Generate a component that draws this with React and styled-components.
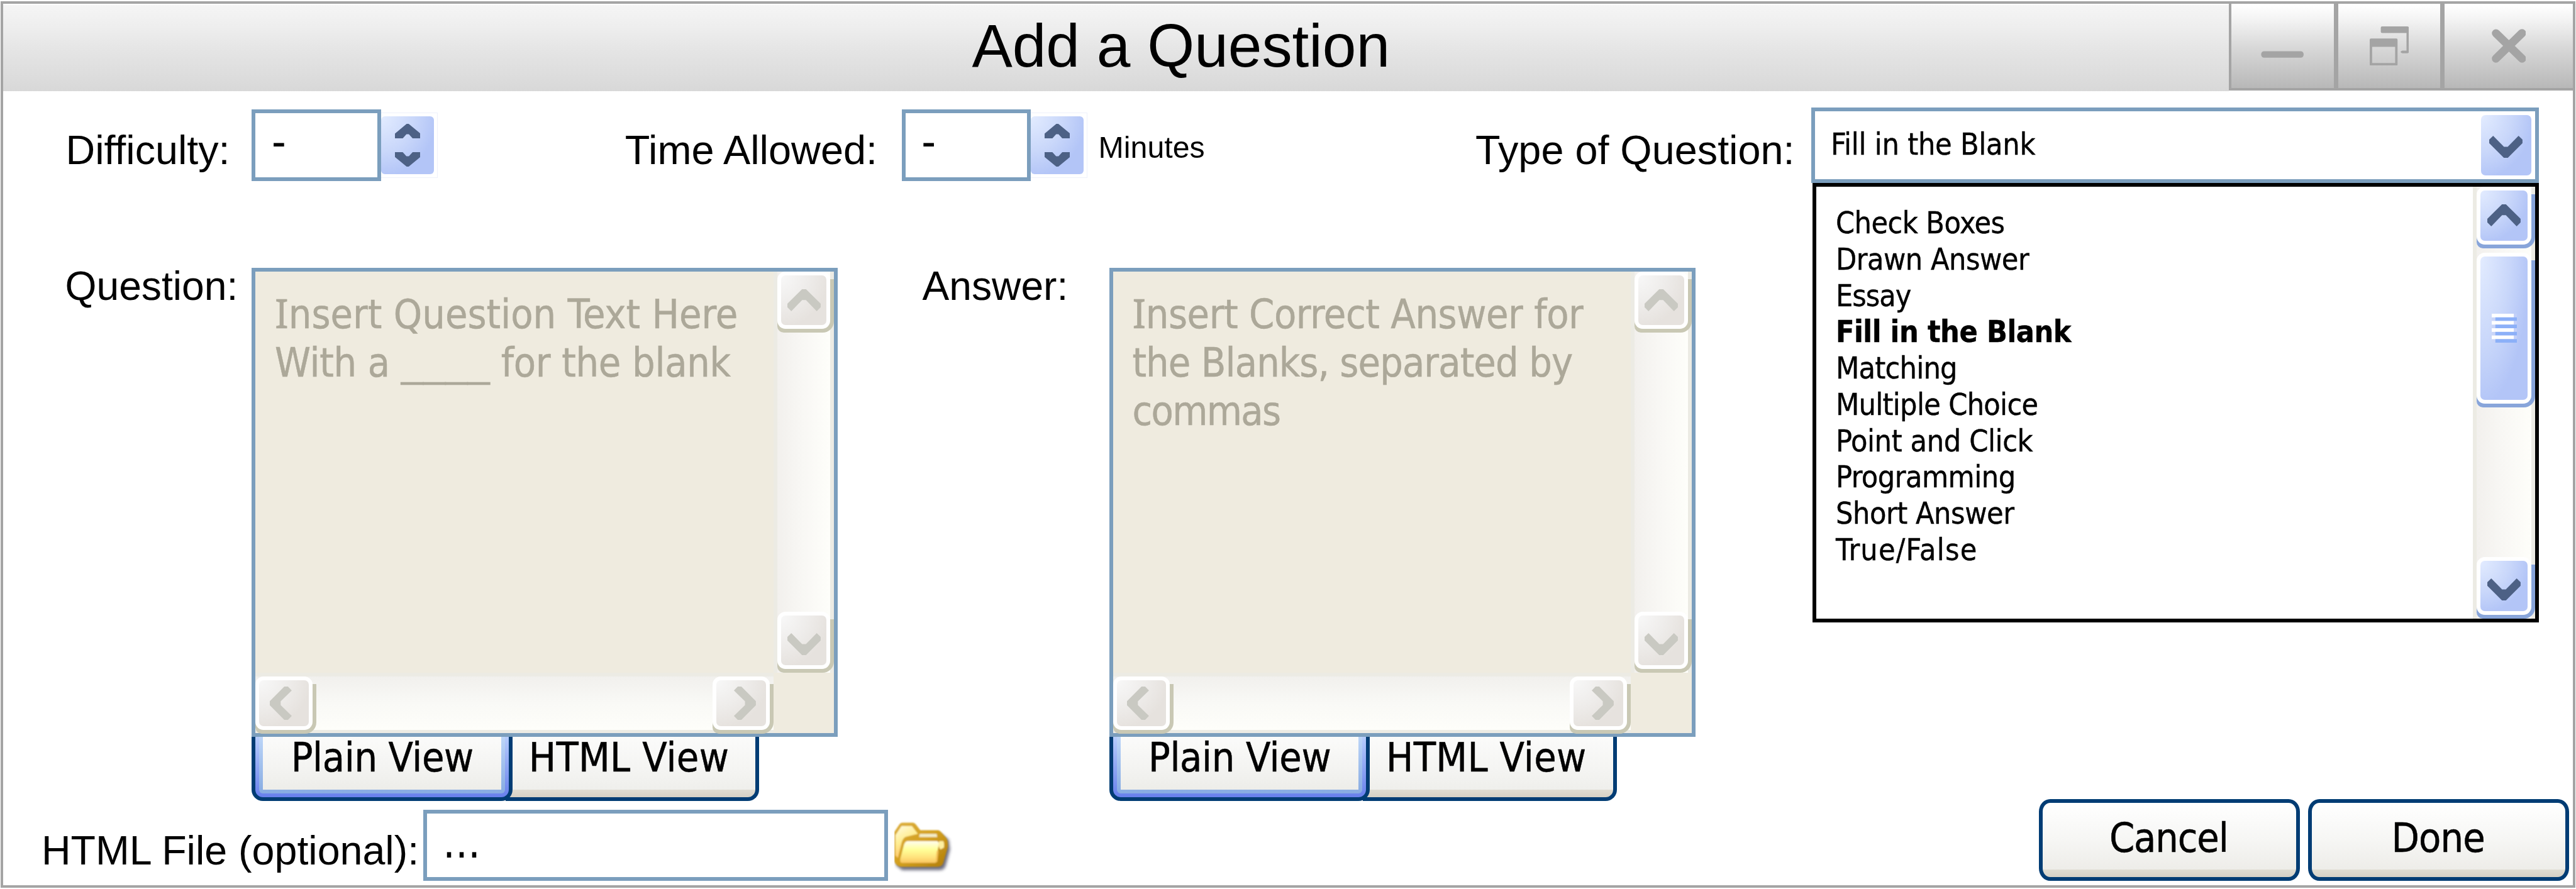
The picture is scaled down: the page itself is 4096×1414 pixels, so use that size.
import React from "react";
import styled, { createGlobalStyle, css } from "styled-components";

const SCALE = 4096 / 4257;
const u = (n) => `${(n * SCALE).toFixed(2)}px`;

const SANS = `"Liberation Sans", Arial, sans-serif`;
const UI = `"DejaVu Sans Condensed", "DejaVu Sans", sans-serif`;

const BLUE = "#7b9ebd";
const NAVY = "#003c74";
const GREY = "#a4a4a4";

const Global = createGlobalStyle`
  *, *::before, *::after { box-sizing: border-box; }
  html, body { margin: 0; padding: 0; background: #fff; overflow: hidden; }
  svg { display: block; flex: none; }
`;

/* ---------- window frame ---------- */

const Page = styled.div`
  width: 4096px;
  height: 1414px;
  padding: 2px 1px;
  background: #fff;
`;

const Frame = styled.div`
  width: 100%;
  height: 100%;
  border: 4px solid ${GREY};
  background: #fff;
  display: flex;
  flex-direction: column;
  color: #000;
`;

const TitleBar = styled.header`
  flex: none;
  display: flex;
  align-items: flex-start;
  height: ${u(144.5)};
`;

const TitleArea = styled.div`
  flex: 1;
  margin-top: 2px;
  padding: ${u(17.6)} 0 0 ${u(1601)};
  background: linear-gradient(#f5f5f5, #eeeeee 25%, #e4e4e4 55%, #d8d8d8);
  height: calc(100% - 2px);
`;

const Title = styled.h1`
  margin: 0;
  font: 400 ${u(100.2)}/1 ${SANS};
  white-space: nowrap;
`;

const Controls = styled.div`
  display: flex;
  height: ${u(143.3)};
  border-left: 4px solid ${GREY};
  border-bottom: 4px solid ${GREY};
  background: ${GREY};
  gap: 7px;
`;

const ControlButton = styled.div`
  width: ${(p) => u(p.$w)};
  height: 100%;
  display: flex;
  align-items: center;
  justify-content: center;
  background: linear-gradient(#ffffff, #f4f4f4 18%, #d8d8d8 52%, #b8b8b8);
`;

/* ---------- body rows ---------- */

const TopRow = styled.section`
  flex: none;
  display: flex;
  align-items: flex-start;
  height: ${u(287)};
  padding-left: ${u(103.4)};
  position: relative;
  z-index: 1;
`;

const EditorRow = styled.section`
  flex: none;
  display: flex;
  align-items: flex-start;
  height: ${u(883)};
  padding-left: ${u(102.3)};
`;

const BottomRow = styled.section`
  flex: 1;
  display: flex;
  align-items: flex-start;
  padding-left: ${u(63.3)};
  padding-right: 6px;
`;

const Label = styled.label`
  flex: none;
  width: ${(p) => u(p.$w)};
  margin-top: ${(p) => u(p.$top || 0)};
  margin-left: ${(p) => u(p.$left || 0)};
  font: 400 ${(p) => u(p.$size || 67.4)}/1 ${SANS};
  white-space: nowrap;
`;

const Spacer = styled.div`
  flex: 1;
`;

/* ---------- inputs ---------- */

const Field = styled.div`
  flex: none;
  width: ${(p) => u(p.$w)};
  height: ${(p) => u(p.$h)};
  margin-top: ${(p) => u(p.$top)};
  border: 6px solid ${BLUE};
  background: #fff;
  padding-left: ${(p) => u(p.$pad)};
  font: 400 ${u(73)}/${(p) => u(p.$lh)} ${UI};
  overflow: hidden;
`;

const StepperFrame = styled.div`
  flex: none;
  width: ${u(94)};
  height: ${u(108)};
  margin-top: ${u(35.8)};
  padding: 5px 5px 5px 0;
  border: solid #eef1fa;
  border-width: 1px 1px 1px 0;
`;

const blueFace = css`
  background: radial-gradient(
    ellipse farthest-side at 0 0,
    #e3ecff 0%,
    #c9d7fa 62%,
    #b3c5f7 104%
  );
`;

const greyFace = css`
  background: radial-gradient(
    ellipse farthest-side at 0 0,
    #f8f8f8 0%,
    #eeecea 60%,
    #e6e2de 104%
  );
`;

const StepperFace = styled.div`
  width: 100%;
  height: 100%;
  border-radius: 6px;
  display: flex;
  flex-direction: column;
  align-items: center;
  justify-content: center;
  gap: ${u(23)};
  ${blueFace}
`;

/* ---------- scroll bars ---------- */

const ScrollKey = styled.div`
  flex: none;
  width: ${(p) => u(p.$w + 6)};
  height: ${(p) => u(p.$h + 6)};
  background: linear-gradient(
      ${(p) => (p.$active ? "#88a5da" : "#c9c8b4")},
      ${(p) => (p.$active ? "#88a5da" : "#c9c8b4")}
    )
    0 12px / 100% 100% no-repeat;
  border-radius: 0 0 18px 10px;
`;

const ScrollCap = styled.div`
  width: ${(p) => u(p.$w)};
  height: ${(p) => u(p.$h)};
  padding: 6px;
  border-radius: 13px;
  background: #fff;
`;

const ScrollFace = styled.div`
  width: 100%;
  height: 100%;
  border-radius: 7px;
  display: flex;
  align-items: center;
  justify-content: center;
  ${(p) => (p.$active ? blueFace : greyFace)}
  padding: ${(p) => p.$shift};
`;

const VTrack = styled.div`
  flex: none;
  width: ${(p) => u(p.$w)};
  height: 100%;
  display: flex;
  flex-direction: column;
  justify-content: space-between;
  border-left: 6px solid #ecebe4;
  background: linear-gradient(90deg, #f2f0ed, #f8f7f4 45%, #fefefa) 0 0 /
    calc(100% - 6px) 100% no-repeat #ecebe4;
`;

const HTrack = styled.div`
  flex: 1;
  display: flex;
  justify-content: space-between;
  border-top: 6px solid #ecebe4;
  background: linear-gradient(#f1f0ed, #f9f9f6 50%, #fefefa) 0 0 / 100%
    calc(100% - 5px) no-repeat #ecebe4;
`;

const KeyStack = styled.div`
  display: flex;
  flex-direction: column;
  gap: ${u(7.5)};
`;

/* ---------- editor ---------- */

const EditorColumn = styled.div`
  flex: none;
  width: ${u(968.7)};
  margin-top: ${u(5.3)};
`;

const EditorBox = styled.div`
  height: ${u(775.4)};
  border: 6px solid ${BLUE};
  background: #efebdf;
  display: flex;
  flex-direction: column;
`;

const EditorMain = styled.div`
  flex: 1;
  min-height: 0;
  display: flex;
`;

const EditorFoot = styled.div`
  flex: none;
  height: ${u(100.6)};
  display: flex;
`;

const FootCorner = styled.div`
  flex: none;
  width: ${u(100.5)};
`;

const Placeholder = styled.div`
  flex: 1;
  padding: ${u(30.5)} 0 0 ${u(31.8)};
  color: #aca899;
  font: 400 ${u(66.7)}/${u(80)} ${UI};
  -webkit-text-stroke: 0.5px currentColor;
  white-space: nowrap;
`;

const Line = styled.div`
  height: ${u(80)};
  letter-spacing: ${(p) => u(p.$track)};
`;

const SerifI = styled.span`
  font-family: "Noto Sans", sans-serif;
  line-height: 0;
`;

const Blank = styled.span`
  font-family: ${SANS};
  font-size: 0.985em;
  line-height: 0;
  letter-spacing: 0;
`;

/* ---------- tabs ---------- */

const Tabs = styled.div`
  display: flex;
  height: ${u(105.3)};
  font: 400 ${u(66.7)}/1 ${UI};
  -webkit-text-stroke: 0.5px currentColor;
  white-space: nowrap;
`;

const ActiveTab = styled.div`
  width: ${u(431)};
  border: 6px solid ${NAVY};
  border-top: 0;
  border-radius: 0 0 18px 18px;
  background: ${NAVY};
  position: relative;
`;

const Ring = styled.div`
  height: 100%;
  padding: 0 6px 6px;
  border-radius: 0 0 ${(p) => p.$r}px ${(p) => p.$r}px;
  background: linear-gradient(${(p) => p.$from}, ${(p) => p.$to});
`;

const TabFace = styled.div`
  height: 100%;
  background: linear-gradient(#fbfbfa, #f4f4f2 55%, #edede9);
  text-align: center;
`;

const InactiveTab = styled.div`
  width: ${u(419.5)};
  margin-left: -${u(12)};
  padding-left: ${u(38.6)};
  border: 6px solid ${NAVY};
  border-width: 0 6px 6px 0;
  border-radius: 0 0 18px 0;
  background: linear-gradient(#dfdcd2, #d6d0c5) 0 100% / 100% 12px no-repeat,
    linear-gradient(#fbfbfa, #f4f4f2 55%, #edede9);
`;

const TabText = styled.div`
  padding-top: 1px;
  letter-spacing: ${(p) => u(p.$track)};
`;

/* ---------- dropdown ---------- */

const Combo = styled.div`
  flex: none;
  position: relative;
  width: ${u(1202.4)};
  height: ${u(124.7)};
  margin-top: ${u(27)};
`;

const ComboField = styled.div`
  width: 100%;
  height: 100%;
  border: 6px solid ${BLUE};
  background: #fff;
  display: flex;
  justify-content: space-between;
  padding: 6px 6px 6px ${u(26)};
`;

const ComboText = styled.span`
  margin-top: ${u(22.6)};
  font: 400 ${u(50)}/1 ${UI};
  letter-spacing: ${u(-0.28)};
  -webkit-text-stroke: 0.4px currentColor;
`;

const ComboButton = styled.div`
  width: ${u(83)};
  height: 100%;
  border-radius: 7px;
  display: flex;
  align-items: center;
  justify-content: center;
  padding-top: ${u(6)};
  ${blueFace}
`;

const Menu = styled.div`
  position: absolute;
  left: ${u(2.6)};
  top: ${u(124.6)};
  width: ${u(1200)};
  height: ${u(726.4)};
  border: 6px solid #000;
  background: #fff;
  display: flex;
`;

const Options = styled.ul`
  flex: 1;
  margin: 0;
  padding: ${u(30.5)} 0 0 ${u(31.7)};
  list-style: none;
  font: 400 ${u(50)}/${u(60.02)} ${UI};
  -webkit-text-stroke: 0.4px currentColor;
`;

const Option = styled.li`
  height: ${u(60.02)};
  font-weight: ${(p) => (p.$selected ? 700 : 400)};
  letter-spacing: ${(p) => u(p.$track)};
`;

/* ---------- footer buttons ---------- */

const PushButton = styled.button`
  flex: none;
  width: ${u(431)};
  height: ${u(135.7)};
  margin: 0 0 0 ${(p) => u(p.$left || 0)};
  padding: 0 ${u(2)} ${u(6)} 0;
  border: 6px solid ${NAVY};
  border-radius: 18px / 20px;
  background: linear-gradient(#dfdcd2, #d6d0c5) 0 100% / 100% 12px no-repeat,
    linear-gradient(#ffffff, #f6f6f4 50%, #edece8 92%) padding-box;
  color: #000;
  font: 400 ${u(66.7)}/1 ${UI};
  -webkit-text-stroke: 0.5px currentColor;
  letter-spacing: ${(p) => u(p.$track)};
`;

const FolderSlot = styled.div`
  margin: ${u(37)} 0 0 ${u(11)};
`;

/* ---------- drawings ---------- */

const ANGLE = { up: 0, right: 90, down: 180, left: 270 };

function Chevron({ dir, color }) {
  const tall = dir === "left" || dir === "right";
  return (
    <svg
      width={(tall ? 36.3 : 55) * SCALE}
      height={(tall ? 55 : 36.3) * SCALE}
      viewBox={tall ? "-18.15 -27.5 36.3 55" : "-27.5 -18.15 55 36.3"}
    >
      <path
        transform={`rotate(${ANGLE[dir]}) translate(-27.5 -18.15)`}
        d="M24.2 0h6.6L55 24v6l-6.5 6.3L30.6 18h-6.2L6.5 36.3 0 30v-6z"
        fill={color}
      />
    </svg>
  );
}

function StepChevron({ down }) {
  return (
    <svg width={42 * SCALE} height={24 * SCALE} viewBox="0 0 42 24">
      <path
        transform={down ? "rotate(180 21 12)" : undefined}
        d="M19.3 0h3.4L42 16v8H29.2L23 17.2h-4L12.8 24H0v-8z"
        fill="#4d6185"
      />
    </svg>
  );
}

function Grip() {
  return (
    <svg width={42 * SCALE} height={48 * SCALE} viewBox="0 0 42 48">
      {[0, 12, 24, 36].map((y) => (
        <g key={y}>
          <rect x="0" y={y + 6} width="6" height="6" fill="#c9d5f8" />
          <rect x="36" y={y} width="6" height="6" fill="#c3d0f9" />
          <rect x="0" y={y} width="36.5" height="6" fill="#fff" />
          <rect x="6" y={y + 6} width="36" height="6" fill="#8cb0f8" />
        </g>
      ))}
    </svg>
  );
}

function MinimizeIcon() {
  return (
    <svg width={71 * SCALE} height={64 * SCALE} viewBox="0 0 71 64">
      <rect x="0.4" y="41" width="70.2" height="10.8" rx="5" fill={GREY} />
    </svg>
  );
}

function RestoreIcon() {
  return (
    <svg width={65 * SCALE} height={65 * SCALE} viewBox="0 0 65 65">
      <path
        d="M20.500 0h41.500q3 0 3 3v38.500q0 3-3 3h-8q-3-1-3-2.200t3-2.200h6.800V11H20.500q-2.200 0-2.200-2.200V2.200Q18.300 0 20.500 0z"
        fill={GREY}
      />
      <path
        d="M2 20h42q2 0 2 2v41q0 2-2 2H2q-2 0-2-2V22q0-2 2-2zM4 33.800V60.500H42V33.800z"
        fillRule="evenodd"
        fill={GREY}
      />
    </svg>
  );
}

function CloseIcon() {
  return (
    <svg width={57 * SCALE} height={56 * SCALE} viewBox="0 0 57 56">
      <path
        d="M7 7.200 50 49M50 7 7 49"
        stroke={GREY}
        strokeWidth="13.500"
        strokeLinecap="round"
      />
    </svg>
  );
}

function FolderIcon() {
  return (
    <svg width={96 * SCALE} height={88 * SCALE} viewBox="9 9 96 88">
      <defs>
        <linearGradient id="folderBack" x1="0" y1="0" x2="1" y2="1">
          <stop offset="0" stopColor="#dcae3c" />
          <stop offset="0.5" stopColor="#d3a01f" />
          <stop offset="1" stopColor="#b07c08" />
        </linearGradient>
        <linearGradient id="folderInner" x1="0" y1="0" x2="0.4" y2="1">
          <stop offset="0" stopColor="#fffbe0" />
          <stop offset="0.5" stopColor="#ffee94" />
          <stop offset="1" stopColor="#fdbf62" />
        </linearGradient>
        <linearGradient id="folderFront" x1="0" y1="0" x2="0" y2="1">
          <stop offset="0" stopColor="#fffdf0" />
          <stop offset="0.4" stopColor="#ffff98" />
          <stop offset="0.75" stopColor="#ffe27c" />
          <stop offset="1" stopColor="#fbc660" />
        </linearGradient>
        <filter id="shadowBlur" x="-20%" y="-20%" width="140%" height="140%">
          <feGaussianBlur stdDeviation="2.6" />
        </filter>
        <filter id="softEdge" x="-5%" y="-5%" width="110%" height="110%">
          <feGaussianBlur stdDeviation="0.9" />
        </filter>
      </defs>
      <path
        d="M18 30 86 30 99 40 101 56 94 82Q92 90 84 90L22 90 12 82z"
        fill="#3c3c55"
        opacity="0.75"
        filter="url(#shadowBlur)"
      />
      <g filter="url(#softEdge)">
        <path
          d="M9 27 17 15Q19 11.500 23 11.500H40Q43 12 45 15L52 24H81Q84 24 87 28L95 37Q98 41 97.500 52L90 78Q88 84.500 80 84.500H21Q13 84 9 76z"
          fill="url(#folderBack)"
        />
        <path
          d="M11 32 21 17H38L48 30 28 35Q23 37 21 45L15 70 11 66z"
          fill="url(#folderInner)"
        />
        <path d="M51 30H79L80 35.500H50z" fill="#f3ecc8" />
        <path
          d="M32 42H80L83 45 77 78H21Q18 77 19 71L25 48Q27 42 32 42z"
          fill="url(#folderFront)"
        />
        <path d="M83 42H90Q92 46 91 53L85 56 82 50z" fill="#fff0a0" />
        <path d="M82 58 80 76 77 78 79 58z" fill="#f7c35a" />
      </g>
    </svg>
  );
}

/* ---------- composed parts ---------- */

function ScrollButton({ dir, active, w, h }) {
  const shift = {
    up: `0 0 ${u(0.5)} 0`,
    down: `${u(12.5)} 0 0 0`,
    left: `0 ${u(11.5)} 0 0`,
    right: `0 0 0 ${u(13)}`,
  }[dir];
  return (
    <ScrollKey $w={w} $h={h} $active={active}>
      <ScrollCap $w={w} $h={h}>
        <ScrollFace $active={active} $shift={shift}>
          <Chevron dir={dir} color={active ? "#4d6185" : "#c9c9c2"} />
        </ScrollFace>
      </ScrollCap>
    </ScrollKey>
  );
}

function NumberStepper() {
  return (
    <>
      <Field $w={213.3} $h={118.7} $top={30} $pad={26.5} $lh={95}>
        -
      </Field>
      <StepperFrame>
        <StepperFace>
          <StepChevron />
          <StepChevron down />
        </StepperFace>
      </StepperFrame>
    </>
  );
}

function Editor({ children }) {
  return (
    <EditorColumn>
      <EditorBox>
        <EditorMain>
          <Placeholder>{children}</Placeholder>
          <VTrack $w={100.5}>
            <ScrollButton dir="up" w={88} h={94.5} />
            <ScrollButton dir="down" w={88} h={94.5} />
          </VTrack>
        </EditorMain>
        <EditorFoot>
          <HTrack>
            <ScrollButton dir="left" w={94} h={89} />
            <ScrollButton dir="right" w={94.5} h={89} />
          </HTrack>
          <FootCorner />
        </EditorFoot>
      </EditorBox>
      <Tabs>
        <ActiveTab>
          <Ring $from="#b6ccfc" $to="#6880ec" $r={12}>
            <Ring $from="#bcd5f8" $to="#87abe2" $r={6}>
              <TabFace>
                <TabText $track={-0.4}>Plain View</TabText>
              </TabFace>
            </Ring>
          </Ring>
        </ActiveTab>
        <InactiveTab>
          <TabText $track={0.3}>HTML View</TabText>
        </InactiveTab>
      </Tabs>
    </EditorColumn>
  );
}

const OPTIONS = [
  ["Check Boxes", -0.6],
  ["Drawn Answer", -0.55],
  ["Essay", -1.1],
  ["Fill in the Blank", -0.5],
  ["Matching", -0.8],
  ["Multiple Choice", -0.75],
  ["Point and Click", -0.42],
  ["Programming", -0.55],
  ["Short Answer", -0.49],
  ["True/False", 1.2],
];

export default function App() {
  return (
    <Page>
      <Global />
      <Frame>
        <TitleBar>
          <TitleArea>
            <Title>Add a Question</Title>
          </TitleArea>
          <Controls>
            <ControlButton $w={168.8}>
              <MinimizeIcon />
            </ControlButton>
            <ControlButton $w={168.8}>
              <RestoreIcon />
            </ControlButton>
            <ControlButton $w={212}>
              <CloseIcon />
            </ControlButton>
          </Controls>
        </TitleBar>

        <TopRow>
          <Label $w={307.6} $top={64.3} $size={67.2}>
            Difficulty:
          </Label>
          <NumberStepper />
          <Label $w={457.3} $top={64.3} $left={309.4}>
            Time Allowed:
          </Label>
          <NumberStepper />
          <Label $w={180} $top={67.5} $left={17.8} $size={50.2}>
            Minutes
          </Label>
          <Label $w={554.9} $top={64.3} $left={443} $size={67.3}>
            Type of Question:
          </Label>
          <Combo>
            <ComboField>
              <ComboText>Fill in the Blank</ComboText>
              <ComboButton>
                <Chevron dir="down" color="#4d6185" />
              </ComboButton>
            </ComboField>
            <Menu>
              <Options>
                {OPTIONS.map(([name, track]) => (
                  <Option
                    key={name}
                    $track={track}
                    $selected={name === "Fill in the Blank"}
                  >
                    {name}
                  </Option>
                ))}
              </Options>
              <VTrack $w={102.5}>
                <KeyStack>
                  <ScrollButton dir="up" active w={90.2} h={96} />
                  <ScrollKey $w={90.2} $h={249.2} $active>
                    <ScrollCap $w={90.2} $h={249.2}>
                      <ScrollFace $active $shift="0">
                        <Grip />
                      </ScrollFace>
                    </ScrollCap>
                  </ScrollKey>
                </KeyStack>
                <ScrollButton dir="down" active w={90.2} h={96} />
              </VTrack>
            </Menu>
          </Combo>
        </TopRow>

        <EditorRow>
          <Label $w={308.7} $top={1.6} $size={66.8}>
            Question:
          </Label>
          <Editor>
            <Line $track={0.02}>
              <SerifI>I</SerifI>nsert Question Text Here
            </Line>
            <Line $track={-0.3}>
              With a <Blank>____</Blank> for the blank
            </Line>
          </Editor>
          <Label $w={309} $top={1.6} $left={139.3} $size={66.7}>
            Answer:
          </Label>
          <Editor>
            <Line $track={-0.45}>
              <SerifI>I</SerifI>nsert Correct Answer for
            </Line>
            <Line $track={-0.95}>the Blanks, separated by</Line>
            <Line $track={-1.7}>commas</Line>
          </Editor>
        </EditorRow>

        <BottomRow>
          <Label $w={631.4} $top={52.4} $size={67.1}>
            HTML File (optional):
          </Label>
          <Field $w={767.5} $h={117.7} $top={18} $pad={25.5} $lh={96}>
            ...
          </Field>
          <FolderSlot>
            <FolderIcon />
          </FolderSlot>
          <Spacer />
          <PushButton $track={-1.2}>Cancel</PushButton>
          <PushButton $track={-0.9} $left={14.3}>
            Done
          </PushButton>
        </BottomRow>
      </Frame>
    </Page>
  );
}
